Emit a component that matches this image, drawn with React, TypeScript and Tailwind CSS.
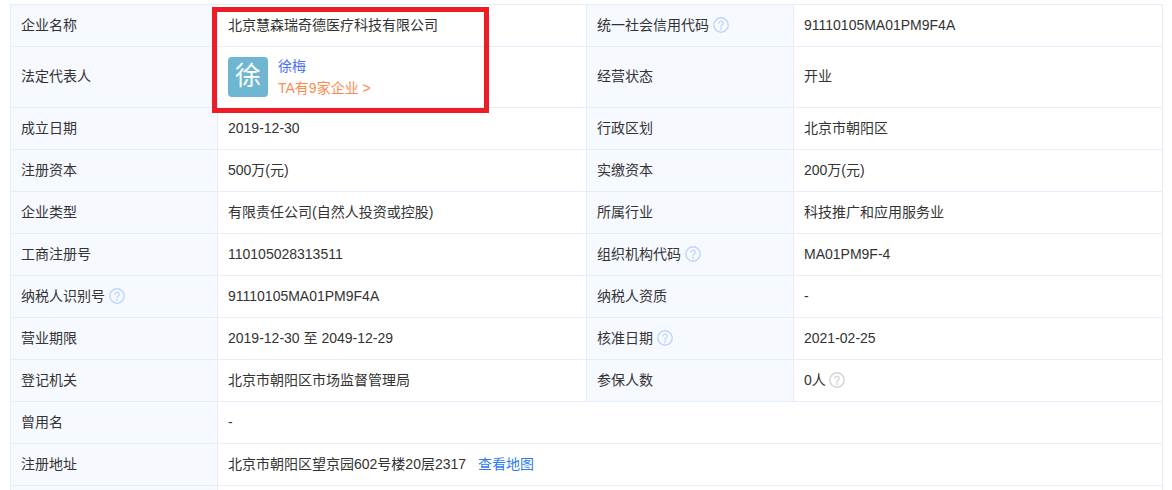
import React from "react";

const HelpIcon = ({ color = "#bfd5f6", className = "ml-[4px]" }: { color?: string; className?: string }) => (
  <svg width="16" height="16" viewBox="0 0 16 16" fill="none" className={`inline-block align-[-3px] ${className}`}>
    <circle cx="8" cy="8" r="7.2" stroke={color} strokeWidth="1.4" />
    <path d="M5.8 6.3a2.2 2.2 0 1 1 3.5 1.8c-.8.6-1.3 1-1.3 2" stroke={color} strokeWidth="1.3" strokeLinecap="round" />
    <circle cx="8" cy="12" r=".9" fill={color} />
  </svg>
);

const Label = ({ children, help }: { children: React.ReactNode; help?: boolean }) => (
  <td className="border border-[#e4edfa] bg-[#f6f9ff] pb-[2px] pl-[10px]">
    {children}
    {help && <HelpIcon />}
  </td>
);

const Value = ({ children, span, flush }: { children: React.ReactNode; span?: number; flush?: boolean }) => (
  <td colSpan={span} className={`border border-[#e4edfa] bg-white pl-[10px] ${flush ? "" : "pb-[2px]"}`}>
    {children}
  </td>
);

const rows: { a: string; aHelp?: boolean; b: string; c: string; cHelp?: boolean; d: string; dHelp?: boolean }[] = [
  { a: "成立日期", b: "2019-12-30", c: "行政区划", d: "北京市朝阳区" },
  { a: "注册资本", b: "500万(元)", c: "实缴资本", d: "200万(元)" },
  { a: "企业类型", b: "有限责任公司(自然人投资或控股)", c: "所属行业", d: "科技推广和应用服务业" },
  { a: "工商注册号", b: "110105028313511", c: "组织机构代码", cHelp: true, d: "MA01PM9F-4" },
  { a: "纳税人识别号", aHelp: true, b: "91110105MA01PM9F4A", c: "纳税人资质", d: "-" },
  { a: "营业期限", b: "2019-12-30 至 2049-12-29", c: "核准日期", cHelp: true, d: "2021-02-25" },
  { a: "登记机关", b: "北京市朝阳区市场监督管理局", c: "参保人数", d: "0人", dHelp: true },
];

export default function App() {
  return (
    <div className="relative h-[490px] w-[1172px] overflow-hidden bg-white pl-[10px] pt-1 font-['Liberation_Sans','Noto_Sans_CJK_SC',sans-serif] text-sm text-[#333]">
      <table className="w-[1152px] table-fixed border-collapse">
        <colgroup>
          <col className="w-[207px]" />
          <col className="w-[369px]" />
          <col className="w-[207px]" />
          <col className="w-[369px]" />
        </colgroup>
        <tbody>
          <tr className="h-[42px]">
            <Label>企业名称</Label>
            <Value>北京慧森瑞奇德医疗科技有限公司</Value>
            <Label help>统一社会信用代码</Label>
            <Value>91110105MA01PM9F4A</Value>
          </tr>
          <tr className="h-[61px]">
            <Label>法定代表人</Label>
            <Value flush>
              <div className="flex items-center gap-[10px]">
                <div className="flex h-10 w-10 items-center justify-center rounded-[4px] bg-[#6eb6d1] text-[26px] text-white">徐</div>
                <div className="flex flex-col gap-[3px]">
                  <span className="leading-[19px] text-[#4a6ef5]">徐梅</span>
                  <span className="leading-[19px] text-[#ff8a50]">TA有9家企业 &gt;</span>
                </div>
              </div>
            </Value>
            <Label>经营状态</Label>
            <Value>开业</Value>
          </tr>
          {rows.map((r) => (
            <tr key={r.a} className="h-[42px]">
              <Label help={r.aHelp}>{r.a}</Label>
              <Value>{r.b}</Value>
              <Label help={r.cHelp}>{r.c}</Label>
              <Value>
                {r.d}
                {r.dHelp && <HelpIcon color="#d2d2d2" className="ml-[3px]" />}
              </Value>
            </tr>
          ))}
          <tr className="h-[42px]">
            <Label>曾用名</Label>
            <Value span={3}>-</Value>
          </tr>
          <tr className="h-[42px]">
            <Label>注册地址</Label>
            <Value span={3}>
              北京市朝阳区望京园602号楼20层2317
              <span className="ml-[12px] text-[#2f7bf0]">查看地图</span>
            </Value>
          </tr>
          <tr className="h-[42px]">
            <Label>&nbsp;</Label>
            <Value span={3}>&nbsp;</Value>
          </tr>
        </tbody>
      </table>
      {/* red annotation drawn over the screenshot */}
      <div className="absolute left-[212px] top-[7px] h-[106px] w-[277px] border-[5px] border-[#ee1c25]" />
    </div>
  );
}
